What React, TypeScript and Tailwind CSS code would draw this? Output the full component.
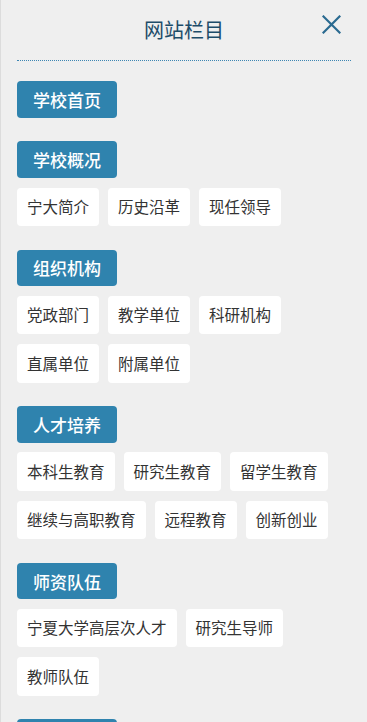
import React from "react";

const sections: { title: string; items: string[] }[] = [
  { title: "学校首页", items: [] },
  { title: "学校概况", items: ["宁大简介", "历史沿革", "现任领导"] },
  { title: "组织机构", items: ["党政部门", "教学单位", "科研机构", "直属单位", "附属单位"] },
  { title: "人才培养", items: ["本科生教育", "研究生教育", "留学生教育", "继续与高职教育", "远程教育", "创新创业"] },
  { title: "师资队伍", items: ["宁夏大学高层次人才", "研究生导师", "教师队伍"] },
];

export default function App() {
  return (
    <div
      className="h-[722px] w-full overflow-hidden bg-[#efefef] border-l border-[#dcdcdc] px-4 text-[#333]"
      style={{ fontFamily: '"Noto Sans CJK SC", "Noto Sans", sans-serif' }}
    >
      <div className="relative flex h-[61px] items-center justify-center border-b border-dotted border-[#3d86b3] pb-[1px]">
        <span className="text-[20px] leading-none text-[#1d4c69]">网站栏目</span>
        <button className="absolute right-[10px] top-[15px] flex h-[19px] w-[19px] items-center justify-center">
          <svg width="19" height="19" viewBox="0 0 19 19" fill="none">
            <path d="M1.5 1.5 L17.5 17.5 M17.5 1.5 L1.5 17.5" stroke="#2a6a90" strokeWidth="2.2" strokeLinecap="square" />
          </svg>
        </button>
      </div>
      <div className="flex flex-col pt-[20px]">
        {sections.map((s) => (
          <div key={s.title} className="mb-[23.7px] flex flex-col">
            <div className="flex">
              <div className="flex h-[36.7px] items-center rounded-[4px] bg-[#2f83ae] px-4 text-[17px] font-medium leading-none text-white">
                {s.title}
              </div>
            </div>
            {s.items.length > 0 && (
              <div className="mt-[9.6px] flex flex-wrap gap-x-[9px] gap-y-[10px]">
                {s.items.map((it) => (
                  <div
                    key={it}
                    className="flex h-[38.3px] items-center rounded-[4px] bg-white px-[10px] text-[15.5px] leading-none text-[#333]"
                  >
                    {it}
                  </div>
                ))}
              </div>
            )}
          </div>
        ))}
        <div className="flex">
          <div className="h-[36.7px] w-[100px] rounded-[4px] bg-[#2f83ae]" />
        </div>
      </div>
    </div>
  );
}
